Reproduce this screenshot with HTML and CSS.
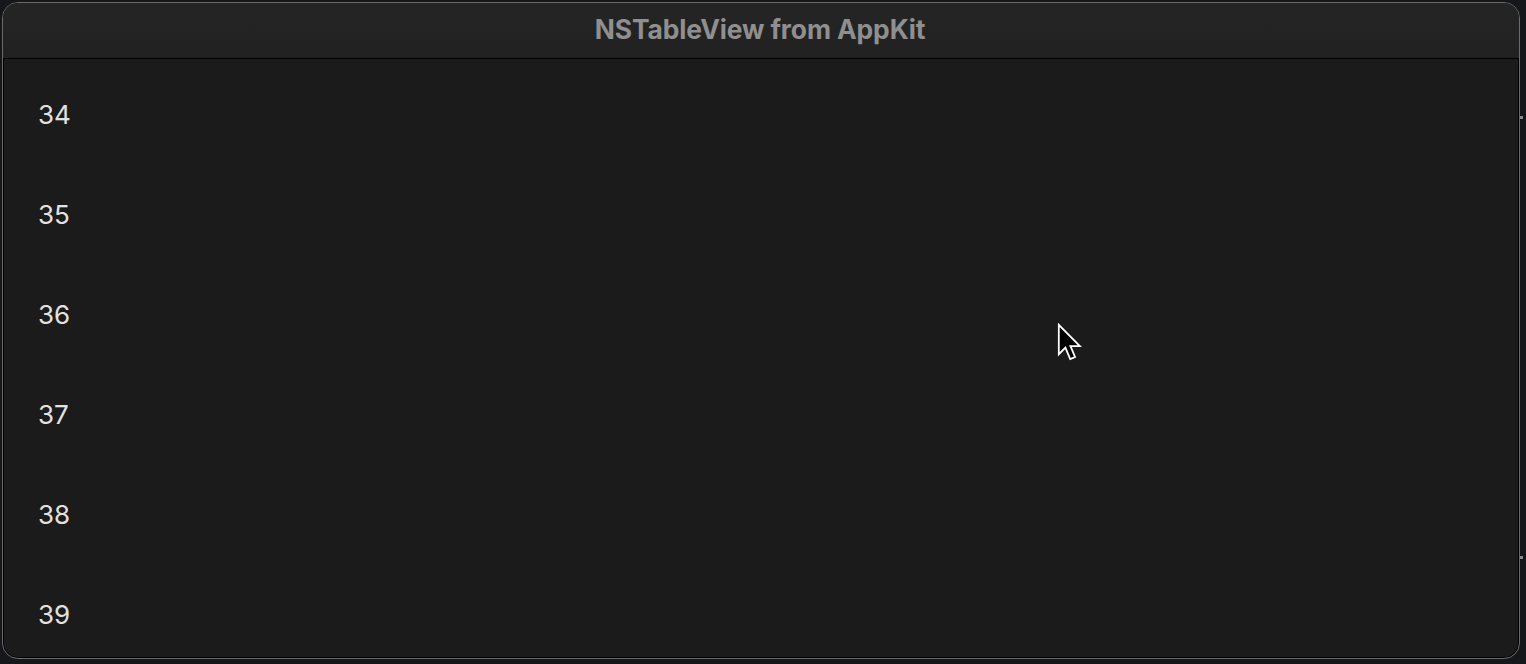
FILE: index.html
```html
<!DOCTYPE html>
<html>
<head>
<meta charset="utf-8">
<link rel="stylesheet" href="styles.css">
</head>
<body>
<div class="desk">
  <div class="window">
    <div class="titlebar"><span class="title">NSTableView from AppKit</span></div>
    <div class="table">
      <div class="row">34</div>
      <div class="row">35</div>
      <div class="row">36</div>
      <div class="row">37</div>
      <div class="row">38</div>
      <div class="row">39</div>
    </div>
  </div>
  <div class="mark mark-top"></div>
  <div class="mark mark-bottom"></div>
  <svg class="cursor" width="28" height="40" viewBox="0 0 23.3 33.3">
    <path d="M1.5 1.5 L1.5 26 L7 20.5 L11 30 L15 28.3 L11.2 19.3 L19 19.3 Z" fill="#000" stroke="#fff" stroke-width="1.5" stroke-linejoin="miter"/>
  </svg>
</div>
</body>
</html>
```
FILE: styles.css
```css
html, body {
  margin: 0;
  padding: 0;
  background: #15171a;
}
.desk {
  position: relative;
  width: 1526px;
  height: 664px;
  padding: 2px 0 0 2px;
  box-sizing: border-box;
}
.window {
  width: 1518px;
  height: 657px;
  box-sizing: border-box;
  border: 1px solid #6a6a6a;
  border-radius: 16px;
  background: #1b1b1b;
  overflow: hidden;
  box-shadow: inset 0 0 0 1px #000;
  display: flex;
  flex-direction: column;
  font-family: "Inter", "Liberation Sans", sans-serif;
}
.titlebar {
  height: 55px;
  flex: none;
  background: linear-gradient(#252525, #212121);
  border-bottom: 1px solid #000;
  display: flex;
  align-items: center;
  justify-content: center;
}
.title {
  color: #8f8f8f;
  font-weight: 700;
  font-size: 26.4px;
  letter-spacing: -0.12px;
  margin-top: -4px;
  margin-left: -2px;
}
.table {
  padding-top: 5px;
  padding-left: 35px;
}
.row {
  height: 100px;
  display: flex;
  align-items: center;
  color: #e2e2e2;
  font-size: 26px;
}
.mark {
  position: absolute;
  left: 1520px;
  width: 3px;
  height: 3px;
  background: #8a8a90;
}
.mark-top { top: 116px; }
.mark-bottom { top: 556px; }
.cursor {
  position: absolute;
  left: 1057px;
  top: 323px;
}
```
